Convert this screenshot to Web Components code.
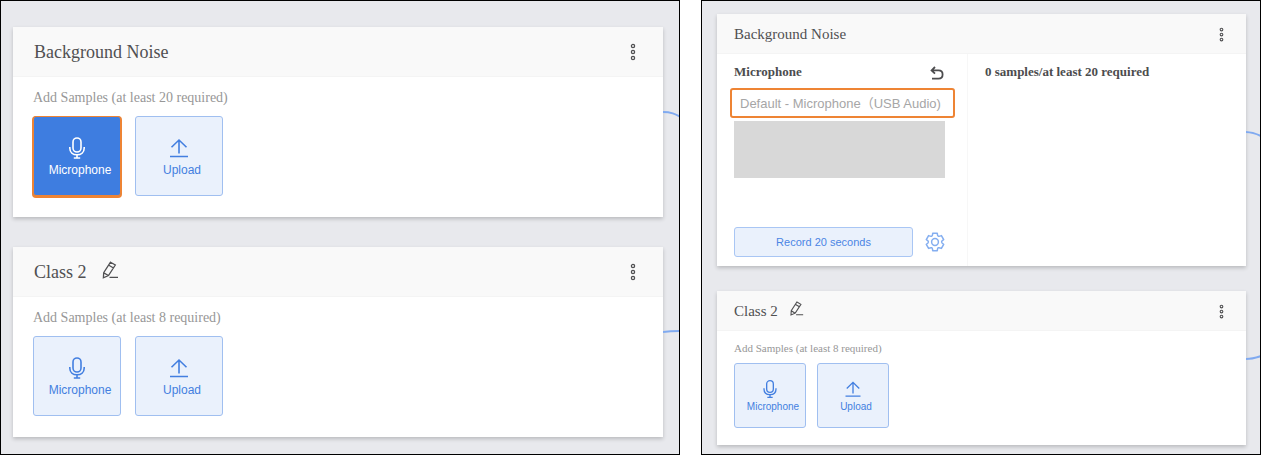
<!DOCTYPE html>
<html lang="en">
<head>
<meta charset="utf-8">
<meta name="viewport" content="width=device-width, initial-scale=1">
<title>Audio classes</title>
<style>
  body {
    margin: 0;
    background: white;
    font-family: "Liberation Serif", "Times New Roman", serif;
  }
</style>
</head>
<body>
<class-board>
  <class-panel>
    <class-card name="Background Noise" wire="M0 1 C8 1 12 3 18 6" wire-at="84">
      <sample-source min="20" active></sample-source>
    </class-card>
    <class-card name="Class 2" editable wire="M0 6 C8 5 12 5 18 5" wire-at="79">
      <sample-source min="8"></sample-source>
    </class-card>
  </class-panel>
  <class-panel compact>
    <class-card name="Background Noise" compact wire="M0 1 C7 1 12 3 18 7" wire-at="117">
      <mic-recorder></mic-recorder>
    </class-card>
    <class-card name="Class 2" compact editable wire="M0 6 C6 6 10 5 18 2" wire-at="62">
      <sample-source min="8" compact></sample-source>
    </class-card>
  </class-panel>
</class-board>

<script>
class ClassBoard extends HTMLElement {
  constructor() {
    super();
    this.attachShadow({ mode: "open" });
  }

  connectedCallback() {
    this.shadowRoot.innerHTML = `
    <style>
      :host {
        display: grid;
        grid-template-columns: minmax(0, 680fr) minmax(0, 560fr);
        gap: 21px;
      }
    </style>
    <slot></slot>
    `;
  }
}

class ClassPanel extends HTMLElement {
  constructor() {
    super();
    this.attachShadow({ mode: "open" });
  }

  connectedCallback() {
    this.shadowRoot.innerHTML = `
    <style>
      :host {
        display: flex;
        flex-direction: column;
        gap: 30px;
        box-sizing: border-box;
        padding: 26px 16px 17px 12px;
        border: 1px solid black;
        background: #e8e9ed;
        overflow: hidden;
      }
      :host([compact]) {
        gap: 25px;
        padding: 13px 14px 9px 15px;
      }
    </style>
    <slot></slot>
    `;
  }
}

class ClassCard extends HTMLElement {
  constructor() {
    super();
    this.attachShadow({ mode: "open" });
  }

  connectedCallback() {
    const pencil = `
      <button class="edit" aria-label="Rename class">
        <svg viewBox="0 0 18 18">
          <path d="M9.5 1.2 L14.3 4 L7.5 14.6 L2.4 16.8 L2.7 11.6 Z M7.9 4.2 L12.5 7 M2.8 11.8 L7.3 14.6 M8.5 16.4 H17"/>
        </svg>
      </button>`;
    this.shadowRoot.innerHTML = `
    <style>
      * {
        margin: 0;
        padding: 0;
        box-sizing: border-box;
      }
      :host {
        --head: 50px;
        --side: 21px;
        --title: 18px;
        --icon: 18px;
        --gap: 14px;
        display: block;
        position: relative;
        background: white;
        box-shadow: 0 2px 4px rgba(0, 0, 0, 0.2);
      }
      :host([compact]) {
        --head: 40px;
        --side: 17px;
        --title: 15px;
        --icon: 15px;
        --gap: 11px;
      }
      header {
        display: flex;
        align-items: center;
        gap: var(--gap);
        height: var(--head);
        padding: 0 var(--side);
        border-bottom: 1px solid #f4f4f4;
        background: #f9f9f9;
        color: #505052;
      }
      h2 {
        padding-top: 2px;
        font-size: var(--title);
        font-weight: 400;
      }
      button {
        display: flex;
        border: 0;
        background: none;
        color: inherit;
        cursor: pointer;
      }
      svg {
        display: block;
        width: var(--icon);
        height: var(--icon);
        fill: none;
        stroke: currentColor;
        stroke-width: 1.3;
      }
      .edit {
        margin-bottom: 4px;
      }
      .menu {
        margin-left: auto;
      }
      :host([compact]) .menu {
        padding-top: 2px;
      }
      .wire {
        position: absolute;
        left: 100%;
        width: 18px;
        height: 10px;
        stroke: #80aaf0;
        stroke-width: 2;
      }
    </style>
    <header>
      <h2>${this.getAttribute("name")}</h2>
      ${this.hasAttribute("editable") ? pencil : ""}
      <button class="menu" aria-label="Class menu">
        <svg viewBox="0 0 18 18">
          <circle cx="9" cy="3" r="1.6"/>
          <circle cx="9" cy="9" r="1.6"/>
          <circle cx="9" cy="15" r="1.6"/>
        </svg>
      </button>
    </header>
    <slot></slot>
    <svg class="wire" viewBox="0 0 18 10" style="top: ${this.getAttribute("wire-at")}px">
      <path d="${this.getAttribute("wire")}"/>
    </svg>
    `;
  }
}

class SampleSource extends HTMLElement {
  constructor() {
    super();
    this.attachShadow({ mode: "open" });
  }

  connectedCallback() {
    this.shadowRoot.innerHTML = `
    <style>
      * {
        margin: 0;
        padding: 0;
        box-sizing: border-box;
      }
      :host {
        --text: 14px;
        --label: 12px;
        --line: 16px;
        --icon: 24px;
        display: block;
        padding: 13px 20px 21px;
      }
      :host([compact]) {
        --text: 11px;
        --label: 10px;
        --line: 14px;
        --icon: 20px;
        padding: 10px 17px 17px;
      }
      p {
        margin-bottom: 10px;
        color: #979797;
        font-size: var(--text);
        line-height: var(--line);
      }
      div {
        display: flex;
        gap: 14px;
      }
      button {
        display: flex;
        flex-direction: column;
        align-items: center;
        gap: 2px;
        width: 88px;
        height: 80px;
        padding-top: 19px;
        border: 1px solid #a0bff0;
        border-radius: 3px;
        background: #eaf1fc;
        color: #437fe0;
        font-family: "Liberation Sans", Arial, sans-serif;
        font-size: var(--label);
        line-height: var(--line);
        cursor: pointer;
      }
      :host([compact]) p {
        margin-bottom: 8px;
      }
      :host([compact]) div {
        gap: 11px;
      }
      :host([compact]) button {
        gap: 1px;
        width: 72px;
        height: 65px;
        padding-top: 15px;
      }
      :host([active]) .mic {
        border-color: #ee8434;
        background: #3e7de0;
        box-shadow: 0 1px 0 1px #ee8434;
        color: white;
      }
      svg {
        width: var(--icon);
        height: var(--icon);
        fill: none;
        stroke: currentColor;
        stroke-width: 1.6;
      }
      span {
        margin-left: 6px;
      }
    </style>
    <p>Add Samples (at least ${this.getAttribute("min")} required)</p>
    <div>
      <button class="mic">
        <svg viewBox="0 0 24 24">
          <rect x="8" y="2" width="8" height="14" rx="4"/>
          <path d="M4.8 11 V12 C4.8 16.5 8 18.8 12 18.8 C16 18.8 19.2 16.5 19.2 12 V11 M12 19 V22 M8.8 22 H15.2"/>
        </svg>
        <span>Microphone</span>
      </button>
      <button>
        <svg viewBox="0 0 24 24">
          <path d="M12 17.5 V4 M4.5 11.3 L12 4 L19.5 11.3 M3 20.5 H21"/>
        </svg>
        <span>Upload</span>
      </button>
    </div>
    `;
  }
}

class MicRecorder extends HTMLElement {
  constructor() {
    super();
    this.attachShadow({ mode: "open" });
  }

  connectedCallback() {
    this.shadowRoot.innerHTML = `
    <style>
      * {
        margin: 0;
        padding: 0;
        box-sizing: border-box;
      }
      :host {
        display: grid;
        grid-template-columns: minmax(0, 251fr) minmax(0, 278fr);
        color: #4c4c4e;
        font-size: 13px;
        font-weight: 700;
        line-height: 16px;
      }
      .input {
        padding: 10px 22px 9px 17px;
        border-right: 1px solid #f7f7f7;
      }
      .samples {
        padding: 10px 17px;
      }
      .row {
        display: flex;
        align-items: center;
        justify-content: space-between;
        gap: 12px;
      }
      button {
        border: 0;
        background: none;
        color: inherit;
        cursor: pointer;
      }
      svg {
        display: block;
        fill: none;
        stroke: currentColor;
      }
      .device {
        display: flex;
        margin: 8px -10px 3px -4px;
      }
      select {
        flex: 1;
        min-width: 0;
        height: 30px;
        padding: 0 4px 0 8px;
        border: 2px solid #ee8434;
        border-radius: 3px;
        appearance: none;
        background: white;
        color: #a6a6a6;
        font-family: "Liberation Sans", "Noto Sans CJK SC", sans-serif;
        font-size: 13px;
      }
      .wave {
        height: 57px;
        margin-bottom: 49px;
        background: #d8d8d8;
      }
      .record {
        flex: 1;
        height: 30px;
        border: 1px solid #a9c6f4;
        border-radius: 3px;
        background: #eaf1fc;
        color: #4a85e4;
        font-family: "Liberation Sans", Arial, sans-serif;
        font-size: 11px;
      }
      .settings {
        color: #84aef0;
      }
      h3 {
        font-size: inherit;
      }
    </style>
    <section class="input">
      <div class="row">
        <label for="device">Microphone</label>
        <button aria-label="Back">
          <svg width="16" height="16" viewBox="0 0 16 16" stroke-width="1.8">
            <path d="M6 3 L2.6 6.4 L6 9.6 M2.6 6.3 H9.5 C12.2 6.3 13.6 8 13.6 10.4 C13.6 12.8 12.2 14.6 9.5 14.6 H3"/>
          </svg>
        </button>
      </div>
      <div class="device">
        <select id="device">
          <option>Default - Microphone（USB Audio)</option>
        </select>
      </div>
      <div class="wave"></div>
      <div class="row">
        <button class="record">Record 20 seconds</button>
        <button class="settings" aria-label="Recording settings">
          <svg width="20" height="20" viewBox="0 0 20 20" stroke-width="1.5" stroke-linejoin="round">
            <path d="M7.7 1.3 H12.3 Q12.5 4.4 13.5 4.2 Q14.5 4.4 16.4 3.6 L18.7 7.7 Q16.4 9 16.6 10 Q16.4 11 18.7 12.3 L16.4 16.4 Q14.5 15.6 13.5 15.8 Q12.5 15.6 12.3 18.7 H7.7 Q7.5 15.6 6.5 15.8 Q5.5 15.6 3.6 16.4 L1.3 12.3 Q3.6 11 3.4 10 Q3.6 9 1.3 7.7 L3.6 3.6 Q5.5 4.4 6.5 4.2 Q7.5 4.4 7.7 1.3 Z"/>
            <circle cx="10" cy="10" r="3.4"/>
          </svg>
        </button>
      </div>
    </section>
    <section class="samples">
      <h3>0 samples/at least 20 required</h3>
    </section>
    `;
  }
}

customElements.define("class-board", ClassBoard);
customElements.define("class-panel", ClassPanel);
customElements.define("class-card", ClassCard);
customElements.define("sample-source", SampleSource);
customElements.define("mic-recorder", MicRecorder);
</script>
</body>
</html>
